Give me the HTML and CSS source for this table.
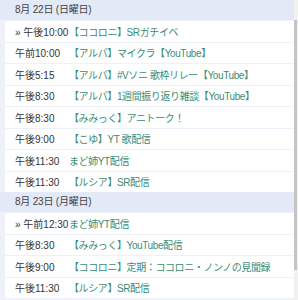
FILE: index.html
```html
<!DOCTYPE html>
<html lang="ja">
<head>
<meta charset="utf-8">
<title>配信スケジュール</title>
<link rel="stylesheet" href="styles.css">
</head>
<body>
<div class="frame">
  <div class="schedule">
    <div class="day">8月 22日 (日曜日)</div>
    <div class="row"><span class="time">» 午後10:00</span><span class="title">【ココロニ】SRガチイベ</span></div>
    <div class="row"><span class="time">午前10:00</span><span class="title">【アルパ】マイクラ【YouTube】</span></div>
    <div class="row"><span class="time">午後5:15</span><span class="title">【アルパ】#Vソニ 歌枠リレー【YouTube】</span></div>
    <div class="row"><span class="time">午後8:30</span><span class="title">【アルパ】1週間振り返り雑談【YouTube】</span></div>
    <div class="row"><span class="time">午後8:30</span><span class="title">【みみっく】アニトーク！</span></div>
    <div class="row"><span class="time">午後9:00</span><span class="title">【こゆ】YT 歌配信</span></div>
    <div class="row"><span class="time">午後11:30</span><span class="title">まど姉YT配信</span></div>
    <div class="row"><span class="time">午後11:30</span><span class="title">【ルシア】SR配信</span></div>
    <div class="day">8月 23日 (月曜日)</div>
    <div class="row"><span class="time">» 午前12:30</span><span class="title">まど姉YT配信</span></div>
    <div class="row"><span class="time">午後8:30</span><span class="title">【みみっく】YouTube配信</span></div>
    <div class="row"><span class="time">午後9:00</span><span class="title">【ココロニ】定期：ココロニ・ノンノの見聞録</span></div>
    <div class="row"><span class="time">午後11:30</span><span class="title">【ルシア】SR配信</span></div>
  </div>
  <div class="scrollbar"><div class="thumb"></div></div>
</div>
</body>
</html>
```
FILE: styles.css
```css
html, body {
  margin: 0;
  padding: 0;
  background: #eef1f9;
}

.frame {
  display: flex;
  width: 298px;
  height: 300px;
  overflow: hidden;
  font-family: "Liberation Sans", "Noto Sans CJK JP", sans-serif;
  font-size: 10px;
}

.schedule {
  flex: 1;
  display: flex;
  flex-direction: column;
  background: #eef1f9;
}

.day {
  flex: none;
  height: 20px;
  line-height: 20px;
  padding-left: 15px;
  background: #e2e9f7;
  color: #444;
  letter-spacing: -0.2px;
}

.row {
  flex: none;
  display: flex;
  align-items: center;
  height: 20.5px;
  margin: 1px 0 0 5px;
  padding-left: 10px;
  background: #fff;
  white-space: nowrap;
  overflow: hidden;
}

.time {
  flex: none;
  width: 54px;
  color: #333;
}

.title {
  color: #3b8b76;
  letter-spacing: -0.4px;
}

.scrollbar {
  flex: none;
  width: 4px;
  display: flex;
  flex-direction: column;
  background: #f1f1f1;
}

.thumb {
  margin-top: 20px;
  height: 250px;
  width: 3px;
  background: #c4c4c4;
}
```
